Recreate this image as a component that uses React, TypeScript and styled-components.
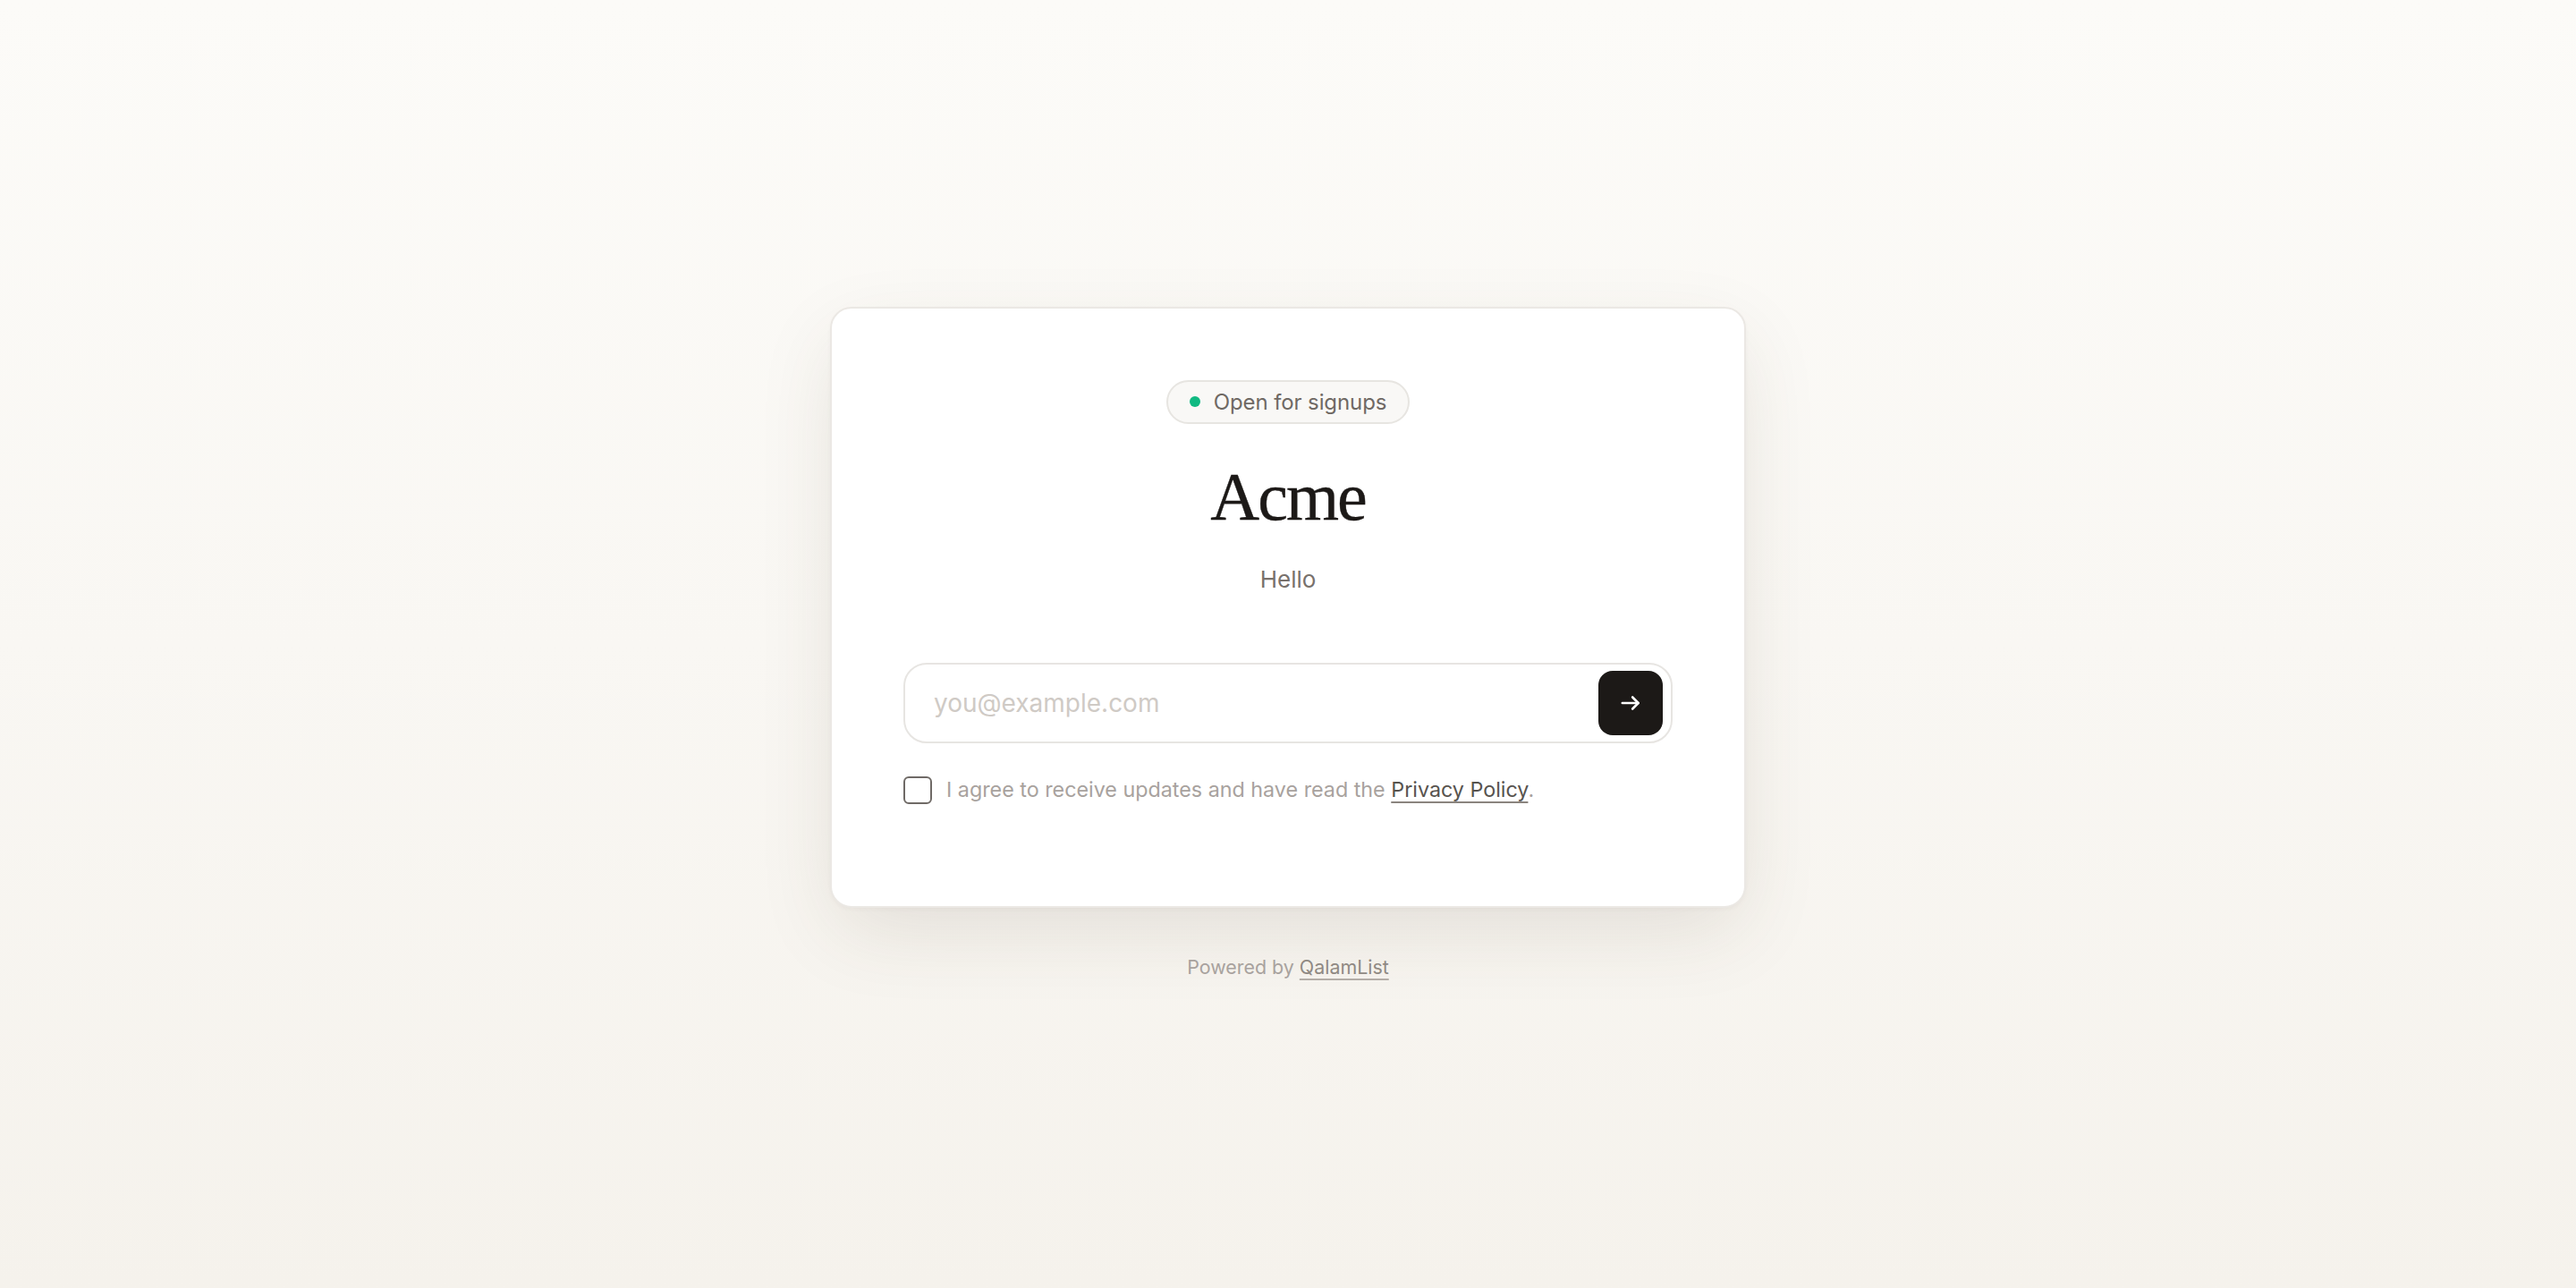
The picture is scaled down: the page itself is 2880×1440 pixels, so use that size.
import React from "react";
import styled, { createGlobalStyle } from "styled-components";

const GlobalStyle = createGlobalStyle`
  *, *::before, *::after { box-sizing: border-box; }
  html, body { margin: 0; padding: 0; }
  body {
    font-family: Inter, "Noto Sans", "Liberation Sans", sans-serif;
    background: linear-gradient(180deg, #fcfbf8 0%, #f9f7f3 50%, #f5f2ec 100%);
    min-height: 100vh;
    color: #1c1917;
  }
`;

const Page = styled.main`
  min-height: 100vh;
  display: flex;
  flex-direction: column;
  align-items: center;
  justify-content: center;
`;

const Card = styled.section`
  width: 1024px;
  background: #ffffff;
  border: 2px solid #ebe8e4;
  border-radius: 24px;
  padding: 80px 80px 112px;
  display: flex;
  flex-direction: column;
  align-items: center;
  box-shadow: 0 2px 4px rgba(60, 45, 30, 0.03),
    0 30px 90px -10px rgba(80, 60, 35, 0.13);
`;

const StatusPill = styled.div`
  display: inline-flex;
  align-items: center;
  gap: 15px;
  height: 49px;
  padding: 0 24px;
  border: 2px solid #e7e5e1;
  border-radius: 999px;
  background: #f9f8f6;
  color: #6f6964;
  font-size: 24px;
  letter-spacing: -0.1px;
`;

const Dot = styled.span`
  width: 12px;
  height: 12px;
  border-radius: 50%;
  background: #10b981;
`;

const Title = styled.h1`
  margin: 40px 0 0;
  font-family: "Liberation Serif", "DejaVu Serif", serif;
  font-weight: 400;
  font-size: 76px;
  line-height: 1.1;
  letter-spacing: -2px;
  color: #1c1917;
  -webkit-text-stroke: 0.4px #1c1917;
`;

const Subtitle = styled.p`
  margin: 31px 0 0;
  font-size: 26px;
  line-height: 1.5;
  color: #78716c;
`;

const Form = styled.form`
  width: 100%;
  margin-top: 74px;
  display: flex;
  flex-direction: column;
  gap: 34px;
`;

const InputShell = styled.div`
  display: flex;
  align-items: center;
  height: 90px;
  padding: 7px 9px 7px 30px;
  border: 2px solid #e7e5e2;
  border-radius: 26px;
  background: #ffffff;
`;

const EmailInput = styled.input`
  flex: 1;
  min-width: 0;
  border: none;
  outline: none;
  background: transparent;
  font-family: inherit;
  font-size: 28px;
  color: #1c1917;
  &::placeholder { color: #cfcac5; }
`;

const SubmitButton = styled.button`
  width: 72px;
  height: 72px;
  flex: none;
  border: none;
  border-radius: 16px;
  background: #1c1917;
  color: #ffffff;
  display: grid;
  place-items: center;
  cursor: pointer;
`;

const ConsentRow = styled.label`
  display: flex;
  align-items: center;
  gap: 16px;
  font-size: 23.3px;
  line-height: 36px;
  color: #a8a29e;
`;

const Box = styled.span`
  width: 32px;
  height: 31px;
  flex: none;
  border: 2px solid #6f6a66;
  border-radius: 6px;
  background: #ffffff;
`;

const InlineLink = styled.a<{ $tone?: string; $line?: string }>`
  color: ${(p) => p.$tone ?? "#57534e"};
  text-decoration: underline;
  text-decoration-thickness: 2px;
  text-underline-offset: 5px;
  text-decoration-color: ${(p) => p.$line ?? "#8a847e"};
`;

const Footer = styled.p`
  margin: 50px 0 0;
  font-size: 21.4px;
  line-height: 1.5;
  color: #a8a29e;
`;

const Arrow = () => (
  <svg width="26" height="26" viewBox="0 0 24 24" fill="none" stroke="currentColor" strokeWidth="2.4" strokeLinecap="round" strokeLinejoin="round">
    <path d="M3.5 12h16.5" />
    <path d="M14 6l6 6-6 6" />
  </svg>
);

export default function App() {
  return (
    <>
      <GlobalStyle />
      <Page>
        <Card>
          <StatusPill>
            <Dot />
            Open for signups
          </StatusPill>
          <Title>Acme</Title>
          <Subtitle>Hello</Subtitle>
          <Form onSubmit={(e) => e.preventDefault()}>
            <InputShell>
              <EmailInput type="email" placeholder="you@example.com" />
              <SubmitButton type="submit" aria-label="Join">
                <Arrow />
              </SubmitButton>
            </InputShell>
            <ConsentRow>
              <Box />
              <span>
                I agree to receive updates and have read the{" "}
                <InlineLink href="#">Privacy Policy</InlineLink>.
              </span>
            </ConsentRow>
          </Form>
        </Card>
        <Footer>
          Powered by <InlineLink href="#" $tone="#8f8983" $line="#b3ada7">QalamList</InlineLink>
        </Footer>
      </Page>
    </>
  );
}
